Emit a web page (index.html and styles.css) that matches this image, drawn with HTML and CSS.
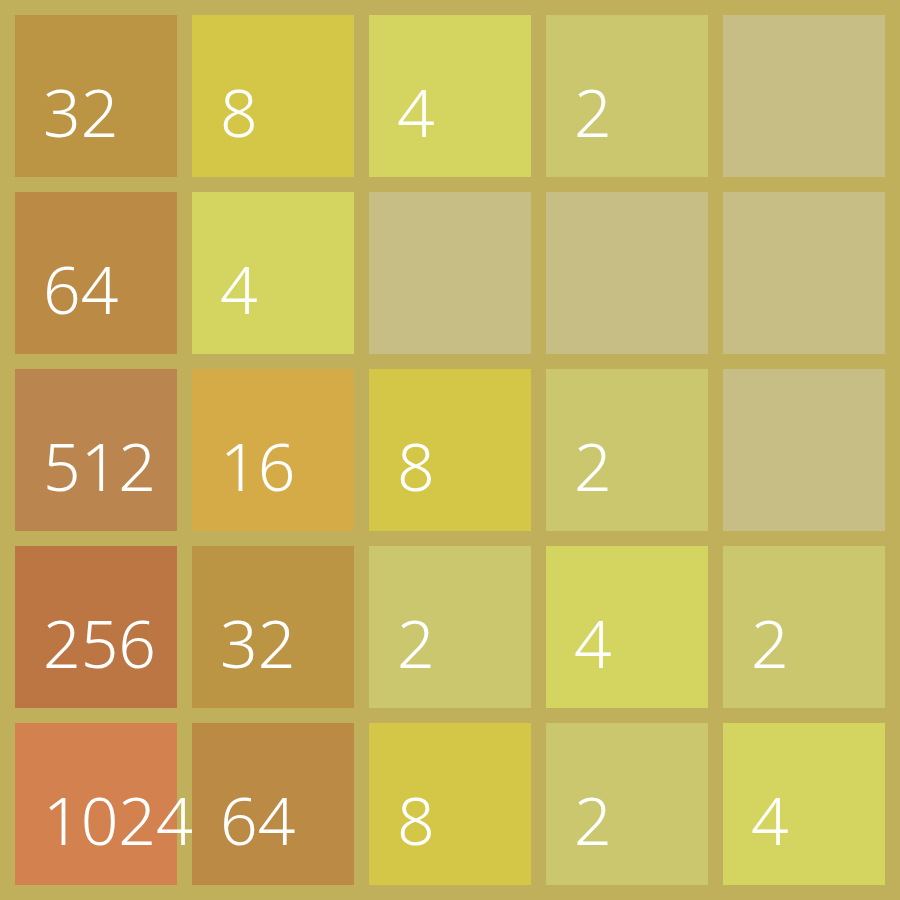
FILE: index.html
```html
<!DOCTYPE html>
<html lang="en">
<head>
  <meta charset="UTF-8" />
  <title>2048</title>
  <link rel="stylesheet" href="styles.css">
</head>
<body>
  <div class="board">
    <div class="tile t32">32</div>
    <div class="tile t8">8</div>
    <div class="tile t4">4</div>
    <div class="tile t2">2</div>
    <div class="tile empty"></div>

    <div class="tile t64">64</div>
    <div class="tile t4">4</div>
    <div class="tile empty"></div>
    <div class="tile empty"></div>
    <div class="tile empty"></div>

    <div class="tile t512">512</div>
    <div class="tile t16">16</div>
    <div class="tile t8">8</div>
    <div class="tile t2">2</div>
    <div class="tile empty"></div>

    <div class="tile t256">256</div>
    <div class="tile t32">32</div>
    <div class="tile t2">2</div>
    <div class="tile t4">4</div>
    <div class="tile t2">2</div>

    <div class="tile t1024">1024</div>
    <div class="tile t64">64</div>
    <div class="tile t8">8</div>
    <div class="tile t2">2</div>
    <div class="tile t4">4</div>
  </div>
</body>
</html>
```

FILE: styles.css
```css
body {
  margin: 0;
  padding: 0;
  background-color: #c0b05c;
  font-family: 'Noto Sans', 'Open Sans', sans-serif;
}

.board {
  width: 900px;
  height: 900px;
  box-sizing: border-box;
  padding: 15px;
  display: grid;
  grid-template-columns: repeat(5, 162px);
  grid-template-rows: repeat(5, 162px);
  gap: 15px;
}

.tile {
  display: flex;
  align-items: center;
  box-sizing: border-box;
  padding: 30px 0 0 28px;
  color: #ffffff;
  font-size: 66px;
  font-weight: 300;
  white-space: nowrap;
}

.empty { background-color: #c7be85; }
.t2 { background-color: #cbc76f; }
.t4 { background-color: #d4d560; }
.t8 { background-color: #d4c646; }
.t16 { background-color: #d4ab46; }
.t32 { background-color: #bb9444; }
.t64 { background-color: #bb8a44; }
.t256 { background-color: #bb7644; }
.t512 { background-color: #bb854f; }
.t1024 { background-color: #d2814f; }
```
